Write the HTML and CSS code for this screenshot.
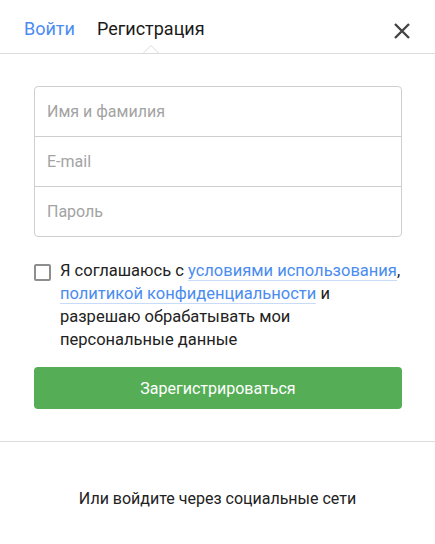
FILE: index.html
```html
<!DOCTYPE html>
<html lang="ru">
<head>
<meta charset="utf-8">
<link rel="stylesheet" href="styles.css">
</head>
<body>
<div class="modal">
  <header class="head">
    <nav class="tabs">
      <a class="tab tab-link">Войти</a>
      <span class="tab tab-active">Регистрация</span>
    </nav>
    <button class="close" aria-label="Закрыть">
      <svg width="18" height="18" viewBox="0 0 18 18"><path d="M2 2L16 16M16 2L2 16" stroke="#444" stroke-width="2.4" stroke-linecap="butt"/></svg>
    </button>
  </header>
  <form class="form">
    <div class="fields">
      <input class="field" type="text" placeholder="Имя и фамилия">
      <input class="field" type="text" placeholder="E-mail">
      <input class="field" type="password" placeholder="Пароль">
    </div>
    <label class="agree">
      <span class="box"></span>
      <span class="agree-text">Я соглашаюсь с <a class="link">условиями использования</a>, <a class="link">политикой конфиденциальности</a> и разрешаю обрабатывать мои <span class="nowrap">персональные данные</span></span>
    </label>
    <button class="submit" type="button">Зарегистрироваться</button>
  </form>
  <div class="social">Или войдите через социальные сети</div>
</div>
</body>
</html>
```
FILE: styles.css
```css
html, body {
  margin: 0;
  padding: 0;
  background: #fff;
}
body {
  font-family: Roboto, "Liberation Sans", sans-serif;
  color: #222;
}
.modal {
  width: 435px;
}
.head {
  height: 53px;
  border-bottom: 1px solid #dcdcdc;
  display: flex;
  align-items: flex-start;
  justify-content: space-between;
  position: relative;
}
.tabs {
  display: flex;
  gap: 22px;
  padding: 17px 0 0 24px;
}
.tab {
  font-size: 18px;
  line-height: 24px;
  position: relative;
}
.tab-link {
  color: #4a8cf0;
}
.tab-active {
  color: #1a1a1a;
}
.tab-active::before,
.tab-active::after {
  content: "";
  position: absolute;
  left: 50%;
  width: 0;
  height: 0;
  border-style: solid;
}
.tab-active::before {
  top: 28px;
  margin-left: -8px;
  border-width: 0 8px 8px 8px;
  border-color: transparent transparent #dcdcdc transparent;
}
.tab-active::after {
  top: 29px;
  margin-left: -7px;
  border-width: 0 7px 7px 7px;
  border-color: transparent transparent #fff transparent;
}
.close {
  border: 0;
  background: none;
  padding: 0;
  margin: 22px 24px 0 0;
  width: 18px;
  height: 18px;
  display: block;
}
.close svg {
  display: block;
}
.form {
  padding: 32px 33px 0 34px;
  display: flex;
  flex-direction: column;
}
.fields {
  border: 1px solid #cfcfcf;
  border-radius: 4px;
  display: flex;
  flex-direction: column;
}
.field {
  border: 0;
  border-top: 1px solid #cfcfcf;
  height: 49px;
  padding: 0 12px;
  font-family: inherit;
  font-size: 16px;
  color: #222;
  background: transparent;
  outline: none;
}
.field:first-child {
  border-top: 0;
}
.field::placeholder {
  color: #a3a3a3;
}
.agree {
  display: flex;
  gap: 9px;
  margin-top: 25px;
}
.box {
  flex: none;
  width: 13px;
  height: 13px;
  border: 2px solid #8e8e8e;
  border-radius: 2px;
  margin-top: 2px;
}
.agree-text {
  font-size: 16.5px;
  line-height: 23px;
  color: #222;
  margin-top: -3px;
}
.nowrap {
  white-space: nowrap;
}
.link {
  color: #4a8cf0;
  border-bottom: 1px solid #c8dcfa;
}
.submit {
  margin-top: 16px;
  height: 42px;
  border: 0;
  border-radius: 4px;
  background: #55ad55;
  color: #fff;
  font-family: inherit;
  font-size: 16px;
}
.social {
  margin-top: 32px;
  border-top: 1px solid #dcdcdc;
  padding-top: 46px;
  text-align: center;
  font-size: 16px;
  line-height: 22px;
  color: #222;
}
```
